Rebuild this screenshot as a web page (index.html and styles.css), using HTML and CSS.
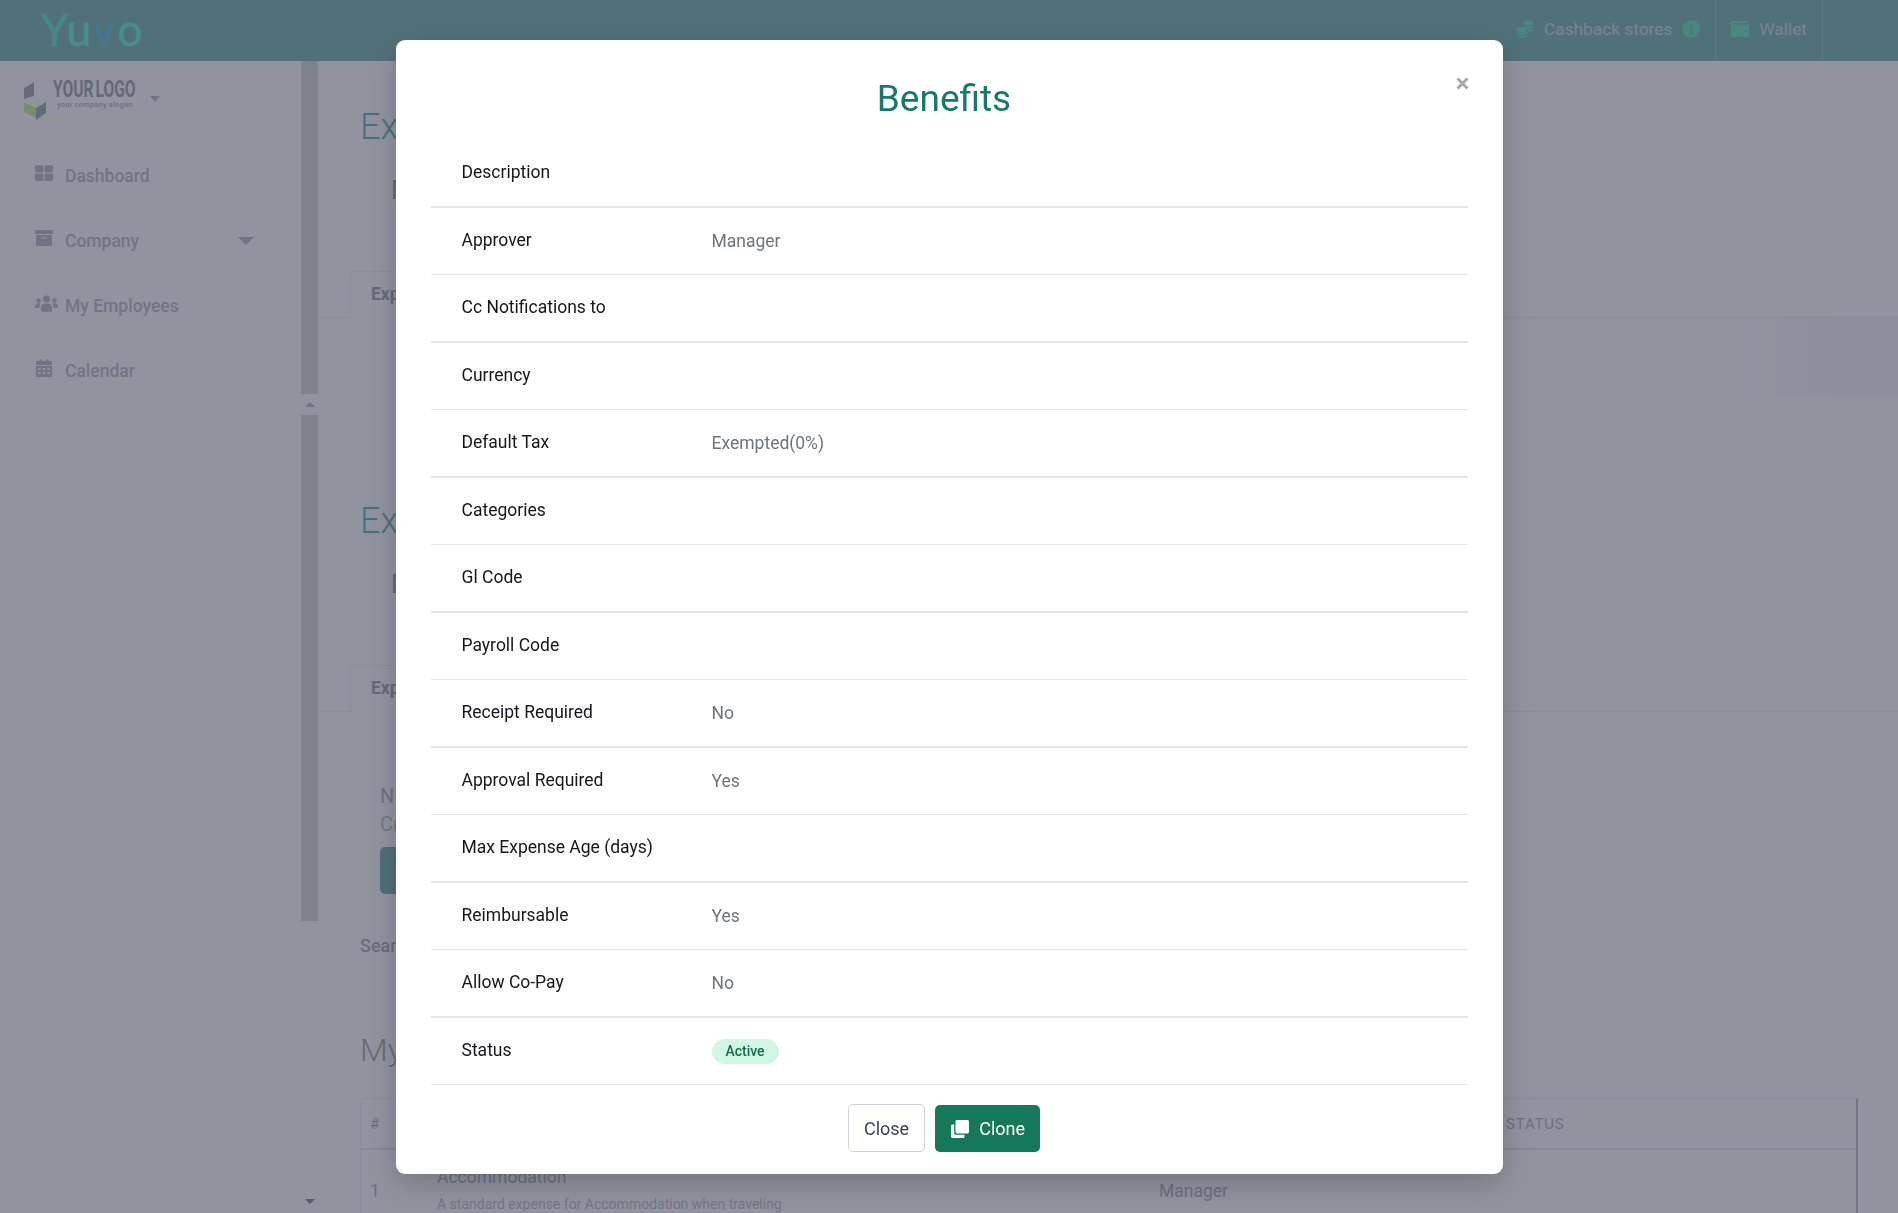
FILE: index.html
```html
<!DOCTYPE html>
<html lang="en">

<head>
    <meta charset="UTF-8">
    <title>Benefits</title>
    <link rel="stylesheet" href="styles.css">
</head>

<body>
    <header class="topbar">
        <div class="brand"><span class="brand-y">Y</span><span class="brand-u">u</span><span class="brand-v">v</span><span class="brand-o">o</span></div>

        <nav class="top-links">
            <a class="top-link">
                <svg class="top-icon" viewBox="0 0 18 18"><ellipse cx="12.500" cy="3" rx="5" ry="2.400"/><path d="M7.500 5.400c1 .8 3 1.200 5 1.200s4-.4 5-1.200v1.400c-.5 1.200-2.600 1.800-5 1.800-.8 0-1.500 0-2.200-.2-.5-.9-1.500-1.500-2.800-1.800z"/><path d="M12 9.800c2.300 0 4.300-.4 5.500-1.400v1.400c-.6 1.100-2.700 1.700-5.200 1.700z"/><ellipse cx="5.500" cy="9.500" rx="5.200" ry="2.500"/><path d="M.3 11.300c1 1 3 1.500 5.200 1.500s4.200-.5 5.200-1.500v1.500c0 1.200-2.300 2.200-5.200 2.200S.3 14 .3 12.800z"/><path d="M.3 14.500c1 1 3 1.500 5.200 1.500s4.200-.5 5.200-1.500v1.300c0 1.200-2.300 2.200-5.200 2.200S.3 17 .3 15.800z"/></svg>
                <span>Cashback stores</span>
                <svg class="top-icon" viewBox="0 0 18 18"><path fill-rule="evenodd" d="M9 .2a8.800 8.800 0 1 0 0 17.600A8.800 8.800 0 0 0 9 .2zM9 3.700a1.500 1.500 0 1 1 0 3 1.500 1.500 0 0 1 0-3zM7.200 8h2.900v5h1v1.300H7.200V13h1V9.300h-1z"/></svg>
            </a>
            <a class="top-link wallet">
                <svg class="top-icon" viewBox="0 0 18 16"><path fill-rule="evenodd" d="M2.200 0h13.300c.6 0 1 .4 1 1v1.200H2.500a.6.6 0 0 0 0 1.200h13.700c1 0 1.800.7 1.800 1.600v9.200c0 1-.8 1.800-1.800 1.800H2.200C1 16 0 15 0 13.800V2.200C0 1 1 0 2.200 0zM15.300 8.700a1.100 1.100 0 1 0 0 2.200 1.100 1.100 0 0 0 0-2.200z"/></svg>
                <span>Wallet</span>
            </a>
        </nav>
    </header>

    <div class="layout">
        <aside class="sidebar">
            <div class="sidebar-inner">
                <div class="company-logo">
                    <svg class="logo-mark" viewBox="0 0 22 39">
                        <path class="logo-dark" d="M0 7l10-6v14L0 18z"/>
                        <path class="logo-green" d="M0 21l12 6v10L0 31z"/>
                        <path class="logo-dark" d="M12 27l10-6v11l-10 7z"/>
                    </svg>
                    <div class="logo-text">
                        <div class="logo-name">YOUR LOGO</div>
                        <div class="logo-slogan">your company slogan</div>
                    </div>
                    <span class="caret small"></span>
                </div>

                <ul class="side-nav">
                    <li>
                        <svg class="side-icon" viewBox="0 0 512 512"><path d="M296 32h192c13 0 24 11 24 24v160c0 13-11 24-24 24H296c-13 0-24-11-24-24V56c0-13 11-24 24-24zm-80 0H24C11 32 0 43 0 56v160c0 13 11 24 24 24h192c13 0 24-11 24-24V56c0-13-11-24-24-24zM0 296v160c0 13 11 24 24 24h192c13 0 24-11 24-24V296c0-13-11-24-24-24H24c-13 0-24 11-24 24zm296 184h192c13 0 24-11 24-24V296c0-13-11-24-24-24H296c-13 0-24 11-24 24v160c0 13 11 24 24 24z"/></svg>
                        <span>Dashboard</span>
                    </li>
                    <li>
                        <svg class="side-icon" viewBox="0 0 18 16"><path fill-rule="evenodd" d="M.8 0h16.400c.4 0 .8.400.8.800V4H0V.8C0 .4.400 0 .8 0zM1 5h16v10c0 .6-.4 1-1 1H2c-.6 0-1-.4-1-1zm5.500 2.500c-.3 0-.5.200-.5.500s.200.500.500.500h5c.3 0 .5-.2.500-.5s-.2-.5-.5-.5z"/></svg>
                        <span>Company</span>
                        <span class="caret"></span>
                    </li>
                    <li>
                        <svg class="side-icon wide" viewBox="0 0 23 16"><circle cx="11.500" cy="4" r="3.600"/><circle cx="3.500" cy="5.500" r="2.300"/><circle cx="19.500" cy="5.500" r="2.300"/><path d="M6 16v-3c0-2.500 1.500-4.500 3.500-4.500h4c2 0 3.500 2 3.500 4.500v3c0 .5-.4 .8-1 .8H7c-.6 0-1-.3-1-.8z"/><path d="M0 12c0-2 1-3.800 3-3.800h1.500c.5 0 1 .2 1.300.5C4.700 9.800 4.300 11 4.300 13H1c-.6 0-1-.4-1-1z"/><path d="M23 12c0-2-1-3.800-3-3.800h-1.500c-.5 0-1 .2-1.300.5 1.100 1.100 1.500 2.300 1.500 4.300H22c.6 0 1-.4 1-1z"/></svg>
                        <span>My Employees</span>
                    </li>
                    <li>
                        <svg class="side-icon" viewBox="0 0 16 18"><path fill-rule="evenodd" d="M3.500 0h1.800v2h5.400V0h1.800v2h2c.8 0 1.500.7 1.500 1.500V6H0V3.500C0 2.700.7 2 1.500 2h2zM0 7h16v9.500c0 .8-.7 1.500-1.500 1.500h-13C.7 18 0 17.300 0 16.500zm2 2v2h2.500V9zm4.700 0v2h2.600V9zm4.800 0v2H14V9zM2 13v2h2.500v-2zm4.700 0v2h2.600v-2zm4.800 0v2H14v-2z"/></svg>
                        <span>Calendar</span>
                    </li>
                </ul>
            </div>

            <div class="side-scroll">
                <div class="thumb first"></div>
                <div class="scroll-btn"><span class="arrow-up"></span></div>
                <div class="thumb second"></div>
                <div class="scroll-rest"><span class="arrow-down"></span></div>
            </div>
        </aside>

        <main class="content">
            <section class="block">
                <h2 class="page-title">Ex</h2>
                <p class="lead">M</p>
                <div class="tabs">
                    <div class="tab">Exp</div>
                </div>
                <div class="tab-pane"><div class="pane-side"></div></div>
            </section>

            <section class="block second-block">
                <h2 class="page-title">Ex</h2>
                <p class="lead">M</p>
                <div class="tabs">
                    <div class="tab">Exp</div>
                </div>
                <div class="notice">
                    <p class="notice-title">N</p>
                    <p class="notice-text">Cr</p>
                    <div class="notice-btn"></div>
                </div>
                <p class="search-label">Sear</p>
            </section>

            <h2 class="page-title dark">My</h2>

            <div class="data-table">
                <div class="data-row head">
                    <span>#</span>
                    <span></span>
                    <span></span>
                    <span class="caps">Status</span>
                </div>
                <div class="data-row">
                    <span>1</span>
                    <div class="name-cell">
                        <div>Accommodation</div>
                        <div class="name-desc">A standard expense for Accommodation when traveling</div>
                    </div>
                    <span>Manager</span>
                    <span></span>
                </div>
            </div>
        </main>
    </div>

    <div class="backdrop">
        <div class="modal">
            <div class="modal-head">
                <h1 class="modal-title">Benefits</h1>
                <svg class="modal-close" viewBox="0 0 13 13"><path d="M1.500 1.500l10 10M11.500 1.500l-10 10"/></svg>
            </div>

            <div class="detail-list">
                <div class="detail-row"><span class="detail-label">Description</span><span class="detail-value"></span></div>
                <div class="detail-row"><span class="detail-label">Approver</span><span class="detail-value">Manager</span></div>
                <div class="detail-row"><span class="detail-label">Cc Notifications to</span><span class="detail-value"></span></div>
                <div class="detail-row"><span class="detail-label">Currency</span><span class="detail-value"></span></div>
                <div class="detail-row"><span class="detail-label">Default Tax</span><span class="detail-value">Exempted(0%)</span></div>
                <div class="detail-row"><span class="detail-label">Categories</span><span class="detail-value"></span></div>
                <div class="detail-row"><span class="detail-label">Gl Code</span><span class="detail-value"></span></div>
                <div class="detail-row"><span class="detail-label">Payroll Code</span><span class="detail-value"></span></div>
                <div class="detail-row"><span class="detail-label">Receipt Required</span><span class="detail-value">No</span></div>
                <div class="detail-row"><span class="detail-label">Approval Required</span><span class="detail-value">Yes</span></div>
                <div class="detail-row"><span class="detail-label">Max Expense Age (days)</span><span class="detail-value"></span></div>
                <div class="detail-row"><span class="detail-label">Reimbursable</span><span class="detail-value">Yes</span></div>
                <div class="detail-row"><span class="detail-label">Allow Co-Pay</span><span class="detail-value">No</span></div>
                <div class="detail-row"><span class="detail-label">Status</span><span class="detail-value"><span class="badge">Active</span></span></div>
            </div>

            <div class="modal-foot">
                <button class="btn btn-light" type="button">Close</button>
                <button class="btn btn-green" type="button">
                    <svg class="btn-icon" viewBox="0 0 18 18"><path d="M6 0h10.500C17.300 0 18 .7 18 1.500V12c0 .8-.7 1.500-1.500 1.500H6c-.8 0-1.500-.7-1.500-1.500V1.500C4.500.7 5.200 0 6 0z"/><path d="M3.200 4.500V13c0 1 .8 1.800 1.800 1.800h8.500v1.700c0 .8-.7 1.500-1.500 1.500H1.500C.7 18 0 17.300 0 16.500V6c0-.8.7-1.500 1.500-1.500z"/></svg>
                    Clone
                </button>
            </div>
        </div>
    </div>
</body>

</html>
```

FILE: styles.css
```css
* {
    margin: 0;
    padding: 0;
    box-sizing: border-box;
    font-family: Roboto, sans-serif;
}

html,
body {
    height: 100%;
    overflow: hidden;
}

body {
    background-color: #fff;
    color: #212529;
    font-size: 17.500px;
}

/* top bar */
.topbar {
    height: 61px;
    background-color: #7fb9b5;
    display: flex;
    justify-content: space-between;
    align-items: stretch;
    padding: 0 75px 0 41px;
}

.brand {
    font-size: 44px;
    line-height: 58px;
    letter-spacing: 2px;
    -webkit-text-stroke: .4px currentColor;
}

.brand span {
    font-family: Lato, sans-serif;
    font-weight: 400;
}

.brand-y {
    color: #68e4d8;
}

.brand-u,
.brand-o {
    color: #6ef2d6;
}

.brand-v {
    color: #6cc4d6;
}

.top-links {
    display: flex;
}

.top-link {
    display: flex;
    align-items: center;
    gap: 10px;
    padding: 0 15px 4px;
    color: #c7e1df;
    font-size: 17.300px;
    border-left: 1px solid transparent;
}

.top-link.wallet {
    border-left-color: #9fc8c5;
    border-right: 1px solid #9fc8c5;
}

.top-icon {
    width: 18px;
    height: 18px;
    fill: #6de7bd;
}

/* page layout */
.layout {
    display: flex;
    height: 1152px;
}

.sidebar {
    width: 318px;
    flex-shrink: 0;
    display: flex;
}

.sidebar-inner {
    width: 301px;
    padding: 20px 0 0 24px;
    color: #bbc1cb;
}

.company-logo {
    display: flex;
    align-items: flex-start;
    height: 51px;
}

.logo-mark {
    width: 22px;
    height: 39px;
}

.logo-dark {
    fill: #a8acb6;
}

.logo-green {
    fill: #c8f098;
}

.logo-text {
    width: 82px;
    margin-left: 7px;
    color: #a4a8b0;
    white-space: nowrap;
}

.logo-name {
    font-size: 23px;
    font-weight: 700;
    line-height: 18px;
    word-spacing: -3px;
    transform: scaleX(.68);
    transform-origin: left center;
}

.logo-slogan {
    font-size: 7.500px;
    font-weight: 500;
    line-height: 10px;
    letter-spacing: .2px;
    margin: 1px 0 0 4px;
    color: #b4b8c0;
}

.caret {
    margin-left: auto;
    margin-right: 47px;
    border-left: 8px solid transparent;
    border-right: 8px solid transparent;
    border-top: 8px solid #bbc1cb;
}

.caret.small {
    margin: 15px 0 0 15px;
    border-left-width: 5.500px;
    border-right-width: 5.500px;
    border-top-width: 6px;
}

.side-nav {
    list-style: none;
    margin-top: 11px;
    padding-left: 11px;
}

.side-nav li {
    display: flex;
    align-items: center;
    height: 65px;
    font-size: 17.500px;
    font-weight: 500;
}

.side-nav li span:first-of-type {
    margin-left: 12px;
}

.side-icon {
    width: 18px;
    height: 18px;
    margin-top: -6px;
    fill: #bbc1cb;
}

.side-icon.wide {
    width: 23px;
    margin-right: -5px;
}

.side-scroll {
    width: 17px;
    display: flex;
    flex-direction: column;
}

.thumb {
    background-color: #dbdddd;
}

.thumb.first {
    height: 333px;
}

.thumb.second {
    height: 506px;
}

.scroll-btn {
    height: 21px;
    background-color: #fff;
    display: flex;
    align-items: center;
    justify-content: center;
}

.scroll-rest {
    flex: 1;
    display: flex;
    align-items: flex-end;
    justify-content: center;
    padding-bottom: 9px;
}

.arrow-up {
    border-left: 5px solid transparent;
    border-right: 5px solid transparent;
    border-bottom: 5px solid #bbbfc8;
}

.arrow-down {
    border-left: 5px solid transparent;
    border-right: 5px solid transparent;
    border-top: 5px solid #8e929c;
}

/* main content, mostly behind the modal */
.content {
    flex: 1;
    min-width: 0;
    padding: 39px 40px 0 42px;
}

.page-title {
    font-size: 36px;
    font-weight: 300;
    line-height: 54px;
    color: #6fb9bb;
}

.page-title.dark {
    margin-top: 65px;
    color: #aaacb2;
    font-size: 32px;
}

.lead {
    margin-top: 24px;
    padding-left: 31px;
    line-height: 24px;
    color: #a4a6b2;
    font-size: 26px;
}

.tabs {
    margin: 69px -40px 0 -42px;
    padding-left: 32px;
    border-bottom: 1px solid #eef0f2;
}

.tab {
    width: 180px;
    height: 47px;
    margin-bottom: -1px;
    padding: 12px 0 0 20px;
    border: 1px solid #eef0f2;
    border-bottom-color: #fff;
    border-radius: 5px 5px 0 0;
    font-weight: 700;
    font-size: 17.500px;
    color: #a6a9b5;
}

.tab-pane {
    height: 77px;
    margin: 0 -40px 0 -42px;
}

.pane-side {
    width: 160px;
    height: 77px;
    margin-left: auto;
    background: linear-gradient(to right, #fff, #f3f7f9 60%);
}

.second-block {
    margin-top: 99px;
}

.notice {
    padding-left: 20px;
    margin-top: 70px;
}

.notice-title,
.notice-text {
    line-height: 28px;
    font-size: 20px;
    color: #b5b7cc;
}

.notice-text {
    color: #c4c6cc;
}

.notice-btn {
    width: 160px;
    height: 47px;
    margin-top: 9px;
    border-radius: 5px;
    background-color: #7eb7b4;
}

.search-label {
    margin-top: 40px;
    line-height: 24px;
    font-weight: 500;
    font-size: 18px;
    color: #aeb2bb;
}

.data-table {
    margin-top: 21px;
    border: 1px solid #f0f1f3;
    border-right: 2px solid #bcc0c8;
    border-bottom: 0;
    border-radius: 5px 0 0 0;
}

.data-row {
    display: grid;
    grid-template-columns: 67px 722px 347px 1fr;
    padding-left: 9px;
    color: #b3b6bf;
    font-size: 17.500px;
    line-height: 24px;
}

.data-row.head {
    height: 51px;
    align-items: center;
    border-bottom: 2px solid #e8e9ec;
    font-size: 15px;
}

.caps {
    text-transform: uppercase;
    letter-spacing: .8px;
}

.data-row > span {
    padding-top: 29px;
}

.data-row.head > span {
    padding-top: 0;
}

.name-cell {
    padding-top: 15px;
}

.name-desc {
    font-size: 14px;
    line-height: 26px;
    padding-top: 2px;
    color: #c2c5cc;
}

/* modal */
.backdrop {
    position: fixed;
    top: 0;
    left: 0;
    width: 100%;
    height: 100%;
    background-color: rgba(35, 41, 63, .5);
    overflow: hidden;
}

.modal {
    width: 1107px;
    margin: 40px auto 0;
    padding: 0 35px;
    height: 1134px;
    background-color: #fff;
    border-radius: 9px;
    box-shadow: 0 10px 30px rgba(0, 0, 0, .2);
}

.modal-head {
    height: 100px;
    display: flex;
    align-items: flex-start;
}

.modal-title {
    flex: 1;
    margin-top: 34px;
    padding-left: 2px;
    text-align: center;
    font-size: 37px;
    font-weight: 400;
    line-height: 50px;
    color: #16796a;
}

.modal-close {
    width: 13px;
    height: 13px;
    margin: 37px -1px 0 0;
    fill: none;
    stroke: #a9a9a9;
    stroke-width: 3;
}

.detail-row {
    display: grid;
    grid-template-columns: 251px 1fr;
    align-items: center;
    height: 67px;
    border-bottom: 1px solid #e5e5ec;
    font-size: 17.500px;
}

.detail-row:nth-child(odd) {
    height: 68px;
    border-bottom-width: 2px;
}

.detail-label {
    padding: 0 0 2px 31px;
    color: #15171c;
}

.detail-value {
    padding-left: 30px;
    color: #6c757d;
}

.badge {
    display: inline-block;
    width: 67px;
    height: 25px;
    border-radius: 13px;
    background-color: #d1f7e4;
    color: #146c50;
    font-size: 14px;
    font-weight: 500;
    line-height: 25px;
    text-align: center;
}

.modal-foot {
    display: flex;
    justify-content: center;
    align-items: center;
    gap: 10px;
    padding: 19px 10px 0 0;
}

.btn {
    height: 48px;
    border-radius: 5px;
    font-size: 18px;
    display: inline-flex;
    align-items: center;
    border: 1px solid #d3d3e0;
    background-color: #fff;
    color: #3b3f5c;
    padding: 0 15px;
}

.btn-green {
    height: 47px;
    margin-top: 1px;
    border: 0;
    background-color: #157858;
    color: #fff;
    gap: 10px;
    padding: 0 15px 0 16px;
}

.btn-icon {
    width: 18px;
    height: 18px;
    fill: #fff;
}
```
